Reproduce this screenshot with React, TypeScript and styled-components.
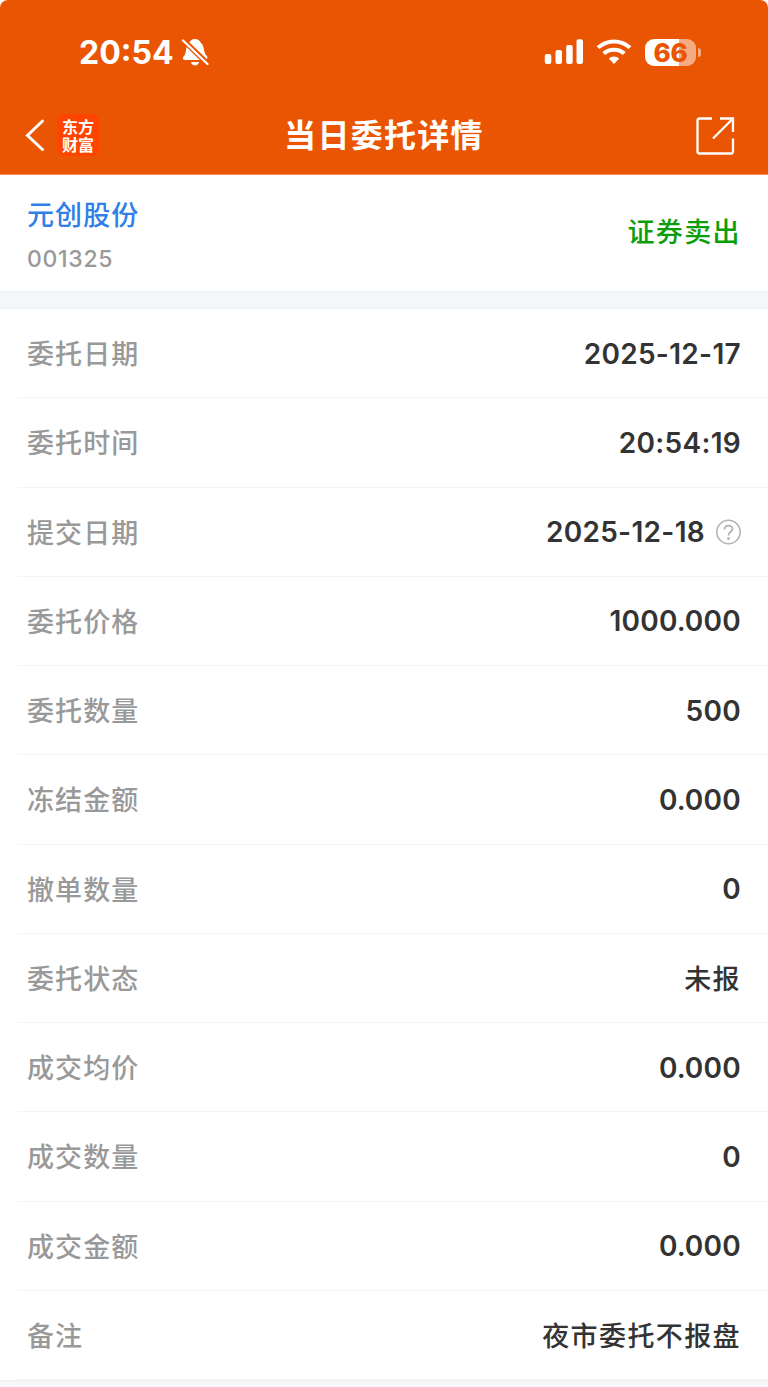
import React from "react";
import styled, { createGlobalStyle } from "styled-components";

const GlobalStyle = createGlobalStyle`
  * {
    box-sizing: border-box;
  }

  body {
    margin: 0;
    background: #ffffff;
    font-family: Inter, "Noto Sans CJK SC", sans-serif;
  }
`;

const Page = styled.div`
  width: 768px;
  height: 1387px;
  overflow: hidden;
  background: #ffffff;
`;

const Header = styled.header`
  height: 175px;
  background: #ea5503;
  border-bottom: 1px solid #f08a50;
  border-radius: 8px 8px 0 0;
  color: #ffffff;
`;

const StatusBar = styled.div`
  display: flex;
  justify-content: space-between;
  align-items: center;
  height: 95px;
  padding: 9px 67px 0 79px;
`;

const StatusGroup = styled.div`
  display: flex;
  align-items: center;
`;

const Clock = styled.span`
  width: 102px;
  padding-top: 2px;
  font-size: 32px;
  font-weight: 750;
  line-height: 40px;
`;

const Battery = styled.div`
  display: flex;
  align-items: center;
  justify-content: center;
  width: 51px;
  height: 27px;
  margin-left: 13px;
  border-radius: 9px;
  background: linear-gradient(to right, #ffffff 34px, #f5ab82 34px);
  color: #ea5503;
  font-size: 26px;
  font-weight: 800;
  letter-spacing: -0.3px;
`;

const BatteryTip = styled.div`
  width: 3px;
  height: 9px;
  margin-left: 2px;
  border-radius: 0 4px 4px 0;
  background: #f5ab82;
`;

const NavBar = styled.div`
  display: grid;
  grid-template-columns: 200px 1fr 200px;
  align-items: center;
  height: 79px;
`;

const NavLeft = styled.div`
  display: flex;
  align-items: center;
  padding-left: 24px;
`;

const NavRight = styled.div`
  display: flex;
  justify-content: flex-end;
  padding: 3px 33px 0 0;
`;

const Logo = styled.div`
  width: 42px;
  height: 42px;
  margin-left: 11px;
  padding-top: 3px;
  border-radius: 7px;
  background: #ff4400;
  font-family: "Noto Sans CJK SC", sans-serif;
  font-size: 16px;
  font-weight: 700;
  line-height: 18px;
  text-align: center;
`;

const Title = styled.h1`
  margin: 0;
  padding-top: 2px;
  font-size: 32px;
  font-weight: 700;
  line-height: 40px;
  letter-spacing: 1.3px;
  text-align: center;
`;

const Summary = styled.section`
  display: flex;
  align-items: center;
  justify-content: space-between;
  height: 116px;
  padding: 0 27px;
`;

const Stock = styled.div`
  padding-top: 7px;
`;

const StockName = styled.div`
  color: #2f80e7;
  font-size: 27px;
  font-weight: 500;
  line-height: 40px;
  letter-spacing: 1.1px;
`;

const StockCode = styled.div`
  margin-top: 4px;
  color: #999999;
  font-size: 23px;
  font-weight: 500;
  line-height: 38px;
  letter-spacing: 0.7px;
`;

const Side = styled.div`
  padding-bottom: 5px;
  color: #0a9f0a;
  font-size: 27px;
  font-weight: 500;
  letter-spacing: 1.4px;
`;

const Gap = styled.div`
  height: 18px;
  border-top: 2px solid #f1f3f4;
  border-bottom: 2px solid #f0f2f3;
  background: #f4f8fa;
`;

const List = styled.section`
  padding-left: 18px;
`;

const Row = styled.div`
  display: flex;
  align-items: center;
  justify-content: space-between;
  height: 89.25px;
  padding: 0 27px 0 9px;
  border-bottom: 1px solid #f4f4f4;
`;

const Label = styled.span`
  padding-bottom: 1px;
  color: #999999;
  font-size: 27px;
  font-weight: 500;
  letter-spacing: 1.1px;
`;

const Value = styled.span<{ $cjk?: boolean }>`
  display: flex;
  align-items: center;
  padding-top: ${({ $cjk }) => ($cjk ? "0" : "1px")};
  color: #333333;
  font-size: ${({ $cjk }) => ($cjk ? "27px" : "28px")};
  font-weight: ${({ $cjk }) => ($cjk ? 500 : 600)};
  letter-spacing: ${({ $cjk }) => ($cjk ? "1.4px" : "0.3px")};

  svg {
    margin: -1px 0 0 11px;
  }
`;

const Point = styled.span`
  margin: 0 -1.2px;
`;

const MutedIcon = () => (
  <svg width="28" height="30" viewBox="0 0 28 30">
    <path
      d="M14 2C17 2 19 4 20 6C24 9 22 16 26 19C27 21 26 23 24 23H4C2 23 1 21 3 19C6 16 4 9 8 6C9 4 11 2 14 2Z"
      fill="#fff"
    />
    <path d="M10 25H18C17.500 29.500 10.500 29.500 10 25Z" fill="#fff" />
    <path d="M1 2L27 27" stroke="#ea5503" strokeWidth="5.500" />
    <path d="M2 3.500L26.500 27" stroke="#fff" strokeWidth="2.300" strokeLinecap="round" />
  </svg>
);

const SignalIcon = () => (
  <svg width="39" height="26" viewBox="0 0 39 26" fill="#fff">
    <rect x="0.800" y="15" width="6.500" height="10" rx="2" />
    <rect x="11.500" y="11" width="6.500" height="14" rx="2" />
    <rect x="22.200" y="6" width="6.500" height="19" rx="2" />
    <rect x="32.500" y="0.300" width="6.500" height="24.700" rx="2" />
  </svg>
);

const WifiIcon = styled(({ className }: { className?: string }) => (
  <svg className={className} width="36" height="26" viewBox="0 0 36 26">
    <g fill="none" stroke="#fff" strokeWidth="4">
      <path d="M2 8.600C11 0.300 25 0.300 34 8.600" />
      <path d="M7.700 14.600C13.500 9.300 22.500 9.300 28.300 14.600" />
    </g>
    <path d="M12.800 19.500C15.800 16.800 20.200 16.800 23.200 19.500L18 25Z" fill="#fff" />
  </svg>
))`
  margin-left: 13px;
`;

const BackIcon = () => (
  <svg width="22" height="34" viewBox="0 0 22 34">
    <path
      d="M18.500 3L3.500 17.500L18.500 31.500"
      fill="none"
      stroke="#fff"
      strokeWidth="3"
      strokeLinecap="round"
    />
  </svg>
);

const ShareIcon = () => (
  <svg width="40" height="40" viewBox="0 0 40 40" fill="none" stroke="#fff" strokeWidth="2.300">
    <path d="M17 2.500H4.500Q2.500 2.500 2.500 4.500V35.500Q2.500 37.500 4.500 37.500H36Q38 37.500 38 35.500V22.500" />
    <path d="M25 2.500H38V16" />
    <path d="M38 2.500L18 22.500" />
  </svg>
);

const HelpIcon = () => (
  <svg width="25" height="26" viewBox="0 0 25 26" fill="none" stroke="#b3b3b3">
    <circle cx="12.500" cy="13" r="11.700" strokeWidth="1.600" />
    <path
      d="M8.500 10.500C8.500 5.300 16.500 5.500 16.500 9.800C16.500 12.800 12.500 12.800 12.500 16.500"
      strokeWidth="1.800"
    />
    <circle cx="12.500" cy="19.700" r="1.400" fill="#b3b3b3" stroke="none" />
  </svg>
);

// the decimal point sits tighter between digits than the font's default
const Amount = ({ text }: { text: string }) => {
  const [whole, decimals] = text.split(".");
  return (
    <span>
      {whole}
      {decimals && <Point>.</Point>}
      {decimals}
    </span>
  );
};

interface Field {
  label: string;
  value: string;
  cjk?: boolean;
  help?: boolean;
}

const fields: Field[] = [
  { label: "委托日期", value: "2025-12-17" },
  { label: "委托时间", value: "20:54:19" },
  { label: "提交日期", value: "2025-12-18", help: true },
  { label: "委托价格", value: "1000.000" },
  { label: "委托数量", value: "500" },
  { label: "冻结金额", value: "0.000" },
  { label: "撤单数量", value: "0" },
  { label: "委托状态", value: "未报", cjk: true },
  { label: "成交均价", value: "0.000" },
  { label: "成交数量", value: "0" },
  { label: "成交金额", value: "0.000" },
  { label: "备注", value: "夜市委托不报盘", cjk: true }
];

const App = () => (
  <React.Fragment>
    <GlobalStyle />
    <Page>
      <Header>
        <StatusBar>
          <StatusGroup>
            <Clock>20:54</Clock>
            <MutedIcon />
          </StatusGroup>
          <StatusGroup>
            <SignalIcon />
            <WifiIcon />
            <Battery>66</Battery>
            <BatteryTip />
          </StatusGroup>
        </StatusBar>
        <NavBar>
          <NavLeft>
            <BackIcon />
            <Logo>
              东方
              <br />
              财富
            </Logo>
          </NavLeft>
          <Title>当日委托详情</Title>
          <NavRight>
            <ShareIcon />
          </NavRight>
        </NavBar>
      </Header>
      <Summary>
        <Stock>
          <StockName>元创股份</StockName>
          <StockCode>001325</StockCode>
        </Stock>
        <Side>证券卖出</Side>
      </Summary>
      <Gap />
      <List>
        {fields.map(({ label, value, cjk, help }) => (
          <Row key={label}>
            <Label>{label}</Label>
            <Value $cjk={cjk}>
              <Amount text={value} />
              {help && <HelpIcon />}
            </Value>
          </Row>
        ))}
      </List>
      <Gap />
    </Page>
  </React.Fragment>
);

export default App;
